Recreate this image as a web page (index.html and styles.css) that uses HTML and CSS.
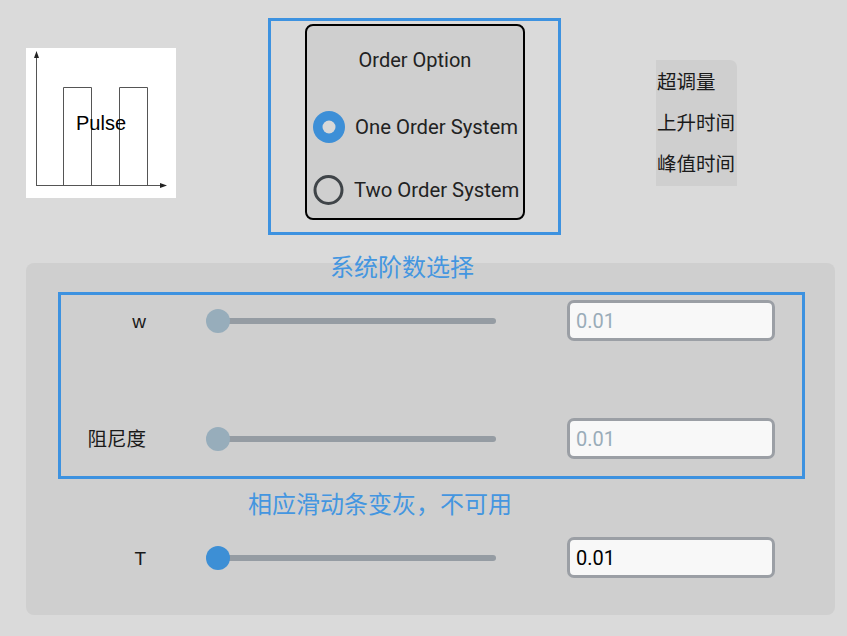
FILE: index.html
```html
<!DOCTYPE html>
<html lang="zh">
<head>
<meta charset="utf-8">
<title>Order Option</title>
<link rel="stylesheet" href="styles.css">
</head>
<body>
<div class="top">
  <div class="pulse">
    <svg class="pulse-svg" width="150" height="150" viewBox="0 0 150 150">
      <g stroke="#555" stroke-width="1" fill="none">
        <line x1="10.5" y1="8" x2="10.5" y2="137.5"/>
        <line x1="10" y1="137.5" x2="136" y2="137.5"/>
        <polyline points="37.5,137.5 37.5,39.5 65.5,39.5 65.5,137.5"/>
        <polyline points="93.5,137.5 93.5,39.5 121.5,39.5 121.5,137.5"/>
      </g>
      <polygon points="10.5,3 8,10 13,10" fill="#222"/>
      <polygon points="141,137.5 134,135 134,140" fill="#222"/>
    </svg>
    <span class="pulse-label">Pulse</span>
  </div>
  <div class="order-frame">
    <div class="order-box">
      <div class="order-title">Order Option</div>
      <div class="radio-row first">
        <svg width="32" height="32" viewBox="0 0 32 32"><circle cx="16" cy="16" r="16" fill="#3d8fd7"/><circle cx="16" cy="16" r="6.5" fill="#d8d8d8"/></svg>
        <span>One Order System</span>
      </div>
      <div class="radio-row second">
        <svg width="32" height="32" viewBox="0 0 32 32"><circle cx="15.5" cy="16" r="13.5" fill="none" stroke="#3f4448" stroke-width="3"/></svg>
        <span>Two Order System</span>
      </div>
    </div>
  </div>
  <div class="metrics">
    <div>超调量</div>
    <div>上升时间</div>
    <div>峰值时间</div>
  </div>
</div>

<div class="panel">
  <div class="caption cap1">系统阶数选择</div>
  <div class="group">
    <div class="row">
      <div class="label">w</div>
      <div class="slider off"><div class="track"></div><div class="thumb"></div></div>
      <input class="num off" type="text" value="0.01" disabled>
    </div>
    <div class="row row2">
      <div class="label cjk">阻尼度</div>
      <div class="slider off"><div class="track"></div><div class="thumb"></div></div>
      <input class="num off" type="text" value="0.01" disabled>
    </div>
  </div>
  <div class="caption cap2">相应滑动条变灰，不可用</div>
  <div class="row row-t">
    <div class="label">T</div>
    <div class="slider"><div class="track"></div><div class="thumb"></div></div>
    <input class="num" type="text" value="0.01">
  </div>
</div>
</body>
</html>
```

FILE: styles.css
```css
html, body {
  margin: 0;
  padding: 0;
}
body {
  background: #dadada;
  width: 847px;
  height: 636px;
  overflow: hidden;
  font-family: "Noto Sans CJK SC", sans-serif;
  color: #111;
}
.top {
  display: flex;
  align-items: flex-start;
  padding-top: 18px;
}
.pulse {
  position: relative;
  margin-left: 26px;
  margin-top: 30px;
  width: 150px;
  height: 150px;
  background: #fff;
  display: flex;
  align-items: center;
  justify-content: center;
}
.pulse-svg {
  position: absolute;
  left: 0;
  top: 0;
}
.pulse-label {
  position: relative;
  font-family: "Liberation Sans", Arial, sans-serif;
  font-size: 20px;
  color: #000;
}
.order-frame {
  margin-left: 92px;
  width: 287px;
  height: 211px;
  border: 3px solid #3d92e0;
}
.order-box {
  box-sizing: border-box;
  margin-top: 3px;
  margin-left: 34px;
  width: 220px;
  height: 196px;
  border: 2px solid #000;
  border-radius: 8px;
  background: #cfcfcf;
  padding-top: 22px;
  font-family: Roboto, "Noto Sans", sans-serif;
  font-size: 20.3px;
  color: #222;
}
.order-title {
  text-align: center;
  line-height: 24px;
  font-size: 20px;
}
.radio-row {
  display: flex;
  align-items: center;
  height: 32px;
  padding-left: 6px;
  gap: 10px;
  white-space: nowrap;
}
.radio-row.first {
  margin-top: 39px;
}
.radio-row.second {
  margin-top: 31px;
  gap: 9px;
}
.metrics {
  margin-left: 95px;
  margin-top: 42px;
  width: 81px;
  height: 126px;
  background: #cfcfcf;
  border-top-right-radius: 7px;
  font-size: 19.5px;
  line-height: 41px;
  padding-left: 1px;
  box-sizing: border-box;
  color: #1a1a1a;
  white-space: nowrap;
}
.panel {
  margin-top: 28px;
  margin-left: 26px;
  width: 809px;
  height: 352px;
  background: #cfcfcf;
  border-radius: 8px;
  overflow: visible;
}
.caption {
  font-size: 24px;
  line-height: 24px;
  color: #4496e0;
  white-space: nowrap;
}
.cap1 {
  position: relative;
  top: -9px;
  margin-left: 304px;
  margin-bottom: -9px;
}
.group {
  margin-top: 14px;
  margin-left: 32px;
  width: 741px;
  border: 3px solid #3d92e0;
  padding: 5px 0 17px 0;
}
.row {
  display: flex;
  align-items: center;
  height: 41px;
}
.row2 {
  margin-top: 77px;
}
.cap2 {
  margin-top: 12px;
  margin-left: 222px;
}
.row-t {
  margin-top: 22px;
  padding-left: 35px;
}
.label {
  width: 85px;
  text-align: right;
  font-size: 19px;
  font-family: "Liberation Sans", "Noto Sans CJK SC", sans-serif;
  color: #1a1a1a;
  padding-top: 2px;
}
.label.cjk {
  padding-top: 0;
  margin-top: -3px;
  font-size: 19.5px;
}
.slider {
  position: relative;
  margin-left: 60px;
  width: 290px;
  height: 24px;
}
.track {
  position: absolute;
  left: 12px;
  right: 0;
  top: 9px;
  height: 6px;
  border-radius: 3px;
  background: #959ca3;
}
.thumb {
  position: absolute;
  left: 0;
  top: 0;
  width: 24px;
  height: 24px;
  border-radius: 50%;
  background: #3d8fd5;
}
.slider.off .thumb {
  background: #97adbb;
}
.num {
  box-sizing: border-box;
  margin: 0 0 0 71px;
  width: 208px;
  height: 41px;
  border: 3px solid #9b9fa5;
  border-radius: 7px;
  background: #f8f8f8;
  padding: 0 0 0 6px;
  font-family: Roboto, "Liberation Sans", sans-serif;
  font-size: 20px;
  color: #000;
  outline: none;
}
.num.off {
  color: #9aacb9;
  -webkit-text-fill-color: #9aacb9;
}
```
